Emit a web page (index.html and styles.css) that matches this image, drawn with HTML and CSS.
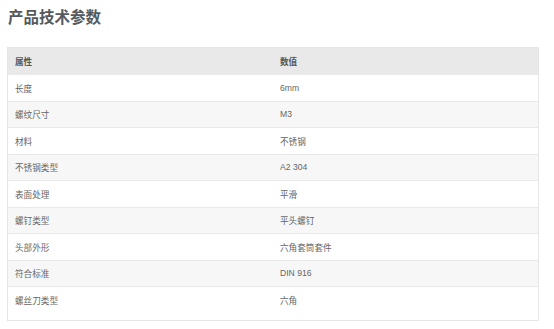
FILE: index.html
```html
<!DOCTYPE html>
<html lang="zh">
<head>
<meta charset="utf-8">
<link rel="stylesheet" href="styles.css">
</head>
<body>
<h2 class="title">产品技术参数</h2>
<div class="spec-box">
  <table class="spec">
    <thead>
      <tr><th>属性</th><th>数值</th></tr>
    </thead>
    <tbody>
      <tr><td>长度</td><td>6mm</td></tr>
      <tr><td>螺纹尺寸</td><td>M3</td></tr>
      <tr><td>材料</td><td>不锈钢</td></tr>
      <tr><td>不锈钢类型</td><td>A2 304</td></tr>
      <tr><td>表面处理</td><td>平滑</td></tr>
      <tr><td>螺钉类型</td><td>平头螺钉</td></tr>
      <tr><td>头部外形</td><td>六角套筒套件</td></tr>
      <tr><td>符合标准</td><td>DIN 916</td></tr>
      <tr><td>螺丝刀类型</td><td>六角</td></tr>
    </tbody>
  </table>
</div>
</body>
</html>
```
FILE: styles.css
```css
html, body {
  margin: 0;
  padding: 0;
  background: #ffffff;
}
body {
  padding: 7px 15px 0 7px;
  font-family: "Liberation Sans", "Noto Sans CJK SC", sans-serif;
  color: #666666;
}
.title {
  margin: 0 0 0 1px;
  font-size: 15.5px;
  line-height: 18px;
  font-weight: bold;
  color: #555a5e;
  font-family: "Noto Sans CJK SC", sans-serif;
}
.spec-box {
  margin-top: 22px;
  border: 1px solid #e6e6e6;
  padding-bottom: 7px;
}
.spec {
  width: 100%;
  border-collapse: collapse;
  table-layout: fixed;
  font-size: 8.6px;
}
.spec th, .spec td {
  height: 26.5px;
  padding: 0 0 0 7px;
  text-align: left;
  vertical-align: middle;
  box-sizing: border-box;
}
.spec th {
  background: #e9e9e9;
  font-weight: bold;
  color: #555555;
}
.spec td {
  border-top: 1px solid #e9e9e9;
  color: #666666;
}
.spec tbody tr:nth-child(even) td {
  background: #f7f7f7;
}
```
